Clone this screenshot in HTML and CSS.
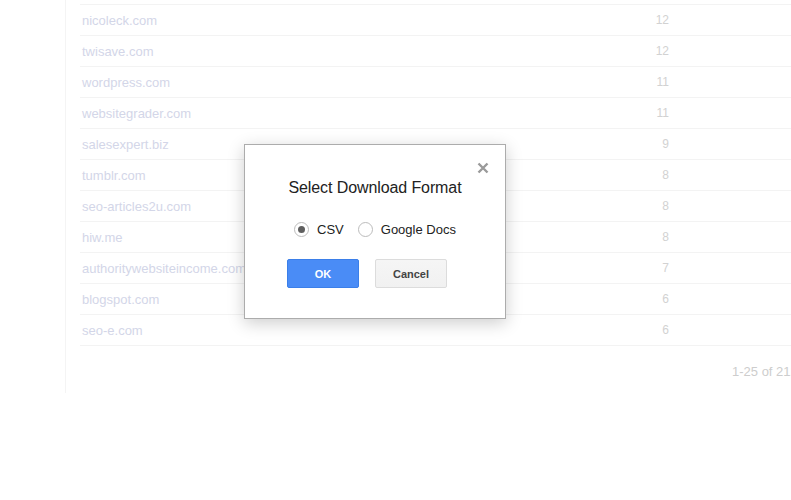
FILE: index.html
```html
<!DOCTYPE html>
<html>
<head>
<meta charset="utf-8">
<link rel="stylesheet" href="styles.css">
</head>
<body>
<div class="page">
  <div class="side"></div>
  <div class="content">
    <div class="table">
      <div class="row"><span class="dom">&nbsp;</span><span class="num">&nbsp;</span></div>
      <div class="row"><span class="dom">nicoleck.com</span><span class="num">12</span></div>
      <div class="row"><span class="dom">twisave.com</span><span class="num">12</span></div>
      <div class="row"><span class="dom">wordpress.com</span><span class="num">11</span></div>
      <div class="row"><span class="dom">websitegrader.com</span><span class="num">11</span></div>
      <div class="row"><span class="dom">salesexpert.biz</span><span class="num">9</span></div>
      <div class="row"><span class="dom">tumblr.com</span><span class="num">8</span></div>
      <div class="row"><span class="dom">seo-articles2u.com</span><span class="num">8</span></div>
      <div class="row"><span class="dom">hiw.me</span><span class="num">8</span></div>
      <div class="row"><span class="dom">authoritywebsiteincome.com</span><span class="num">7</span></div>
      <div class="row"><span class="dom">blogspot.com</span><span class="num">6</span></div>
      <div class="row"><span class="dom">seo-e.com</span><span class="num">6</span></div>
    </div>
    <div class="pager">1-25 of 212</div>
  </div>
</div>

<div class="dialog">
  <svg class="close" width="12" height="12" viewBox="0 0 12 12"><path d="M1.5 1.5L10.5 10.5M10.5 1.5L1.5 10.5" stroke="#9a9a9a" stroke-width="2.4" fill="none"/></svg>
  <div class="title">Select Download Format</div>
  <div class="radios">
    <label class="opt"><span class="radio on"></span>CSV</label>
    <label class="opt"><span class="radio"></span>Google Docs</label>
  </div>
  <div class="buttons">
    <button class="btn ok">OK</button>
    <button class="btn cancel">Cancel</button>
  </div>
</div>
</body>
</html>
```
FILE: styles.css
```css
html, body {
  margin: 0;
  padding: 0;
  overflow: hidden;
  background: #fff;
  font-family: "Liberation Sans", Arial, sans-serif;
}
.page {
  display: flex;
  align-items: flex-start;
  width: 791px;
  height: 500px;
}
.side {
  width: 65px;
  height: 393px;
  border-right: 1px solid #f4f4f4;
  flex: none;
}
.content {
  flex: 1;
  margin-left: 14px;
  min-width: 0;
}
.table {
  margin-top: -26px;
}
.row {
  display: flex;
  align-items: center;
  height: 30px;
  border-bottom: 1px solid #f3f3f3;
}
.dom {
  flex: 1;
  padding-left: 2px;
  font-size: 13px;
  color: #d3d6e8;
  white-space: nowrap;
}
.num {
  width: 60px;
  margin-right: 122px;
  text-align: right;
  font-size: 12px;
  color: #d2d2d2;
}
.pager {
  padding-left: 652px;
  margin-top: 18px;
  font-size: 13px;
  color: #cdcdcd;
  white-space: nowrap;
}
.dialog {
  position: absolute;
  left: 244px;
  top: 144px;
  width: 260px;
  height: 173px;
  box-sizing: content-box;
  background: #fff;
  border: 1px solid #acacac;
  box-shadow: 0 4px 16px rgba(0,0,0,0.2);
  display: flex;
  flex-direction: column;
}
.close {
  position: absolute;
  right: 16px;
  top: 17px;
}
.title {
  margin-top: 33px;
  text-align: center;
  font-size: 16px;
  line-height: 20px;
  color: #222;
  letter-spacing: -0.1px;
}
.radios {
  display: flex;
  justify-content: center;
  gap: 14px;
  margin-top: 21px;
  height: 20px;
  align-items: center;
}
.opt {
  display: flex;
  align-items: center;
  gap: 8px;
  font-size: 13px;
  color: #222;
}
.radio {
  width: 13px;
  height: 13px;
  border: 1px solid #bcbcbc;
  border-radius: 50%;
  background: #fff;
  display: flex;
  align-items: center;
  justify-content: center;
}
.radio.on::after {
  content: "";
  width: 7px;
  height: 7px;
  border-radius: 50%;
  background: #5f5f5f;
}
.buttons {
  display: flex;
  gap: 16px;
  margin-top: 20px;
  padding-left: 42px;
}
.btn {
  width: 72px;
  height: 29px;
  border-radius: 2px;
  font-family: "Liberation Sans", Arial, sans-serif;
  font-size: 11px;
  font-weight: bold;
  padding: 0;
}
.ok {
  background: #4a8cf6;
  border: 1px solid #3b7fe9;
  color: #fff;
}
.cancel {
  background: linear-gradient(#f5f5f5, #f1f1f1);
  border: 1px solid #dcdcdc;
  color: #444;
}
```
